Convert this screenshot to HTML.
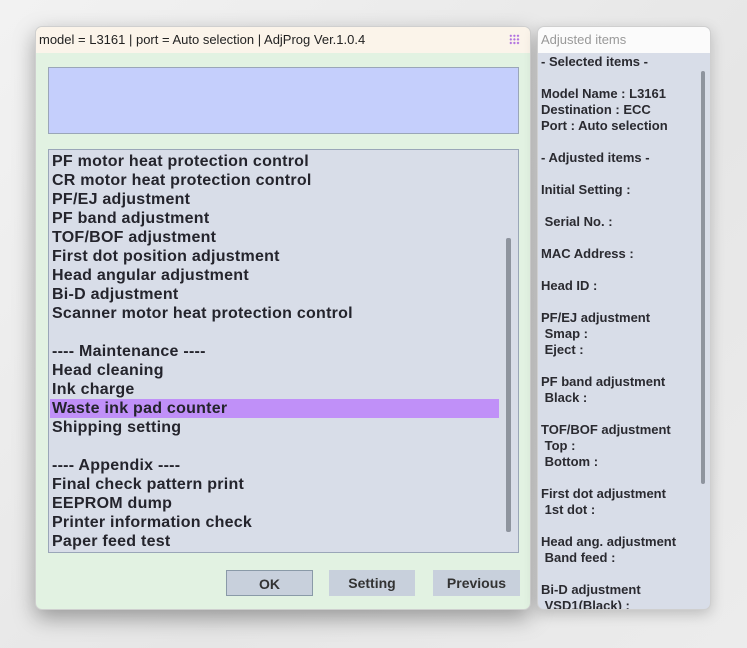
<!DOCTYPE html>
<html><head><meta charset="utf-8"><style>
*{margin:0;padding:0;box-sizing:border-box}
body{width:747px;height:648px;background:linear-gradient(135deg,#f2f2f2,#e6e6e6 60%,#ececec);position:relative;overflow:hidden;font-family:"Liberation Sans",sans-serif}
.win{position:absolute;left:35px;top:26px;width:496px;height:584px;background:#e2f2e2;border-radius:7px;box-shadow:0 8px 22px rgba(0,0,0,.35);overflow:hidden;border:1px solid #cfcfcf}
.tb{height:26px;background:#fbf4ea;font-size:13px;color:#222;padding:5px 0 0 3px}
.dots{position:absolute;right:10px;top:7px;width:11px;height:11px;background:radial-gradient(circle,#b070e0 1px,transparent 1.3px) 0 0/3.6px 3.6px}
.blue{position:absolute;left:12px;top:40px;width:471px;height:67px;background:#c5cffc;border:1px solid #9aa6b8}
.list{position:absolute;left:12px;top:122px;width:471px;height:404px;background:#d8dde8;border:1px solid #9aa6b8;font-size:16px;font-weight:bold;color:#24242c;line-height:19px;padding-top:2px;letter-spacing:0.25px}
.list p{padding-left:3px;height:19px}
.hl{background:#c090f8;width:449px;margin-left:1px;padding-left:2px!important}
.sb{position:absolute;left:457px;top:88px;width:5px;height:294px;background:#8e949e;border-radius:2px}
.btn{position:absolute;top:543px;height:26px;background:#c8d0dc;font-size:14px;font-weight:bold;color:#333;text-align:center;line-height:26px}
.rp{position:absolute;left:537px;top:26px;width:174px;height:584px;background:#d8dde8;border-radius:7px;box-shadow:0 4px 14px rgba(0,0,0,.2);overflow:hidden;border:1px solid #cfcfcf}
.rt{height:26px;background:#fbfbfb;color:#999;font-size:13px;padding:5px 0 0 3px}
.rc{font-size:13px;font-weight:bold;color:#2a2a30;line-height:16px;padding:1px 0 0 3px;white-space:pre}
.rsb{position:absolute;left:163px;top:44px;width:4px;height:413px;background:#8e949e;border-radius:2px}
</style></head><body>
<div class="win">
<div class="tb">model = L3161 | port = Auto selection | AdjProg Ver.1.0.4</div><div class="dots"></div>
<div class="blue"></div>
<div class="list">
<p>PF motor heat protection control</p><p>CR motor heat protection control</p><p>PF/EJ adjustment</p><p>PF band adjustment</p><p>TOF/BOF adjustment</p><p>First dot position adjustment</p><p>Head angular adjustment</p><p>Bi-D adjustment</p><p>Scanner motor heat protection control</p><p></p><p>---- Maintenance ----</p><p>Head cleaning</p><p>Ink charge</p><p class="hl">Waste ink pad counter</p><p>Shipping setting</p><p></p><p>---- Appendix ----</p><p>Final check pattern print</p><p>EEPROM dump</p><p>Printer information check</p><p>Paper feed test</p>
<div class="sb"></div>
</div>
<div class="btn" style="left:190px;width:87px;border:1px solid #8a9aa8">OK</div>
<div class="btn" style="left:293px;width:86px">Setting</div>
<div class="btn" style="left:397px;width:87px">Previous</div>
</div>
<div class="rp"><div class="rt">Adjusted items</div>
<div class="rc">- Selected items -

Model Name : L3161
Destination : ECC
Port : Auto selection

- Adjusted items -

Initial Setting :

 Serial No. :

MAC Address :

Head ID :

PF/EJ adjustment
 Smap :
 Eject :

PF band adjustment
 Black :

TOF/BOF adjustment
 Top :
 Bottom :

First dot adjustment
 1st dot :

Head ang. adjustment
 Band feed :

Bi-D adjustment
 VSD1(Black) :</div>
<div class="rsb"></div></div>
</body></html>
